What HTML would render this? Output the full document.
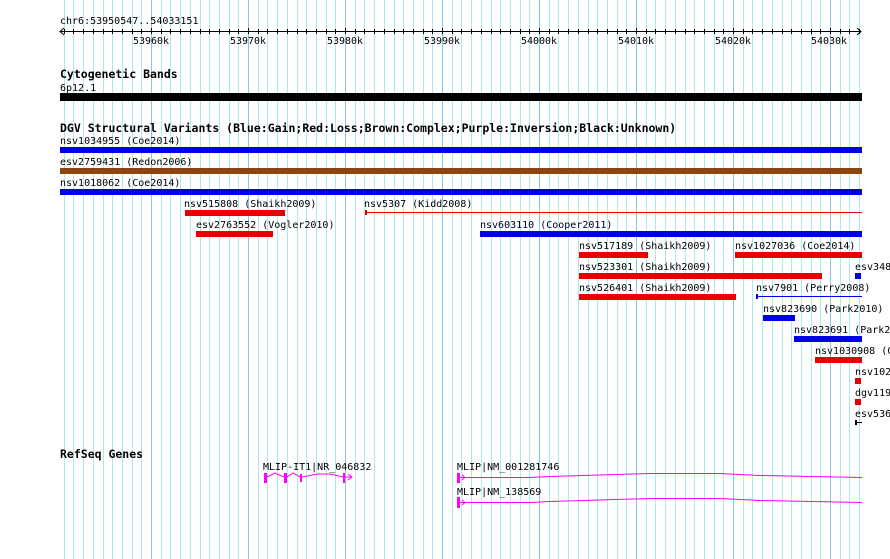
<!DOCTYPE html>
<html><head><style>
html,body{margin:0;padding:0;background:#fff;width:890px;height:559px;overflow:hidden}
svg{display:block}
text{font-family:"DejaVu Sans Mono","Liberation Mono",monospace;font-size:10px;fill:#000}
.b{font-weight:bold;font-size:11.5px}
</style></head><body>
<svg id="s" width="890" height="559" xmlns="http://www.w3.org/2000/svg">
<g id="grid"></g>
<text x="60" y="24">chr6:53950547..54033151</text>
<line x1="60" y1="31.5" x2="861" y2="31.5" stroke="#000"/>
<path d="M64 28 L60 31.5 L64 35 M857 28 L861 31.5 L857 35" fill="none" stroke="#000"/>
<g id="ticks" stroke="#000"></g>
<g text-anchor="middle">
<text x="151" y="44">53960k</text><text x="248" y="44">53970k</text><text x="345" y="44">53980k</text>
<text x="442" y="44">53990k</text><text x="539" y="44">54000k</text><text x="636" y="44">54010k</text>
<text x="733" y="44">54020k</text><text x="829" y="44">54030k</text>
</g>
<text class="b" x="60" y="78">Cytogenetic Bands</text>
<text x="60" y="91">6p12.1</text>
<rect x="60" y="93" width="802" height="8" fill="#000"/>
<text class="b" x="60" y="132">DGV Structural Variants (Blue:Gain;Red:Loss;Brown:Complex;Purple:Inversion;Black:Unknown)</text>
<text x="60" y="144">nsv1034955 (Coe2014)</text>
<rect x="60" y="147" width="802" height="6" fill="#0000e6"/>
<text x="60" y="165">esv2759431 (Redon2006)</text>
<rect x="60" y="168" width="802" height="6" fill="#8b4513"/>
<text x="60" y="186">nsv1018062 (Coe2014)</text>
<rect x="60" y="189" width="802" height="6" fill="#0000e6"/>
<text x="184" y="207">nsv515808 (Shaikh2009)</text>
<rect x="185" y="210" width="100" height="6" fill="#e60000"/>
<text x="364" y="207">nsv5307 (Kidd2008)</text>
<rect x="365" y="212" width="497" height="1" fill="#e60000"/><rect x="365" y="210" width="2" height="5" fill="#e60000"/>
<text x="196" y="228">esv2763552 (Vogler2010)</text>
<rect x="196" y="231" width="77" height="6" fill="#e60000"/>
<text x="480" y="228">nsv603110 (Cooper2011)</text>
<rect x="480" y="231" width="382" height="6" fill="#0000e6"/>
<text x="579" y="249">nsv517189 (Shaikh2009)</text>
<rect x="579" y="252" width="69" height="6" fill="#e60000"/>
<text x="735" y="249">nsv1027036 (Coe2014)</text>
<rect x="735" y="252" width="127" height="6" fill="#e60000"/>
<text x="579" y="270">nsv523301 (Shaikh2009)</text>
<rect x="579" y="273" width="243" height="6" fill="#e60000"/>
<text x="855" y="270">esv348</text>
<rect x="855" y="273" width="6" height="6" fill="#0000e6"/>
<text x="579" y="291">nsv526401 (Shaikh2009)</text>
<rect x="579" y="294" width="157" height="6" fill="#e60000"/>
<text x="756" y="291">nsv7901 (Perry2008)</text>
<rect x="756" y="296" width="106" height="1" fill="#0000e6"/><rect x="756" y="294" width="2" height="5" fill="#0000e6"/>
<text x="763" y="312">nsv823690 (Park2010)</text>
<rect x="763" y="315" width="32" height="6" fill="#0000e6"/>
<text x="794" y="333">nsv823691 (Park2</text>
<rect x="794" y="336" width="68" height="6" fill="#0000e6"/>
<text x="815" y="354">nsv1030908 (C</text>
<rect x="815" y="357" width="47" height="6" fill="#e60000"/>
<text x="855" y="375">nsv102</text>
<rect x="855" y="378" width="6" height="6" fill="#e60000"/>
<text x="855" y="396">dgv119</text>
<rect x="855" y="399" width="6" height="6" fill="#e60000"/>
<text x="855" y="417">esv536</text>
<rect x="855" y="420" width="2" height="5" fill="#000"/><rect x="855" y="422" width="7" height="1" fill="#000"/>
<text class="b" x="60" y="458">RefSeq Genes</text>
<text x="263" y="470">MLIP-IT1|NR_046832</text>
<g fill="#ff00ff">
<rect x="264" y="473" width="3" height="10"/><rect x="284" y="473" width="3" height="10"/>
<rect x="300" y="474" width="2" height="8"/><rect x="343" y="473" width="2" height="10"/>
</g>
<path d="M267 477 L275 473 L284 477 M287 477 L293 473 L300 477 M302 477 L318 474 L330 474 L343 477 L352 477 M348 474 L352 477 L348 480" fill="none" stroke="#ff00ff"/>
<text x="457" y="470">MLIP|NM_001281746</text>
<rect x="457" y="473" width="3" height="10" fill="#ff00ff"/>
<path d="M460 477.5 L485 477.5 L530 477.5 L550 476.5 L650 473.5 L720 473.5 L760 475.5 L862 477.5 M462 475 L465 477.5 L462 480" fill="none" stroke="#ff00ff"/>
<text x="457" y="495">MLIP|NM_138569</text>
<rect x="457" y="497" width="3" height="11" fill="#ff00ff"/>
<path d="M460 502.5 L485 502.5 L530 502.5 L550 501.5 L650 498.5 L720 498.5 L760 500.5 L862 502.5 M462 500 L465 502.5 L462 505" fill="none" stroke="#ff00ff"/>
</svg>
<script>
(function(){
var ns="http://www.w3.org/2000/svg",g=document.getElementById("grid"),t=document.getElementById("ticks");
var s="";
for(var k=-9;k<=73;k++){
 var x=Math.round(151+k*9.7);
 if(x<60||x>862)continue;
 var dark=(k%10===0);
 var r=document.createElementNS(ns,"rect");
 r.setAttribute("x",x);r.setAttribute("y",0);r.setAttribute("width",1);r.setAttribute("height",559);
 r.setAttribute("fill",dark?"#8cc4e6":"#aee8ee");
 g.appendChild(r);
 s+="M"+(x+0.5)+" "+(dark?28:29)+"v"+(dark?6:5);
}
var p=document.createElementNS(ns,"path");p.setAttribute("d",s);t.appendChild(p);
})();
</script>
</body></html>
